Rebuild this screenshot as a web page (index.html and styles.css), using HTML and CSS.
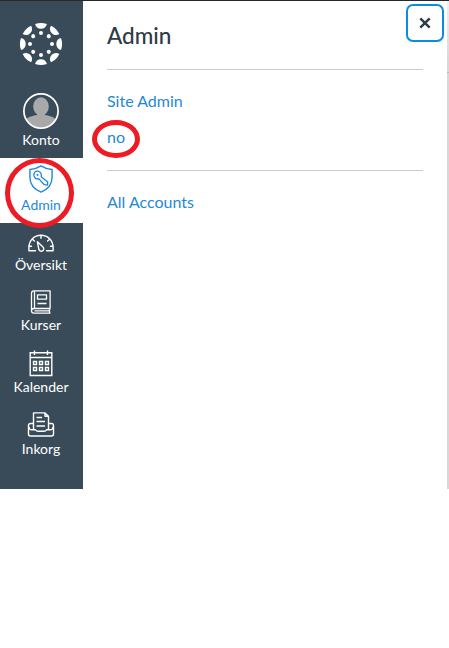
FILE: index.html
```html
<!DOCTYPE html>
<html lang="sv">
<head>
<meta charset="utf-8">
<title>Admin</title>
<link rel="stylesheet" href="styles.css">
</head>
<body>
<div class="app">
  <nav class="nav">
    <a class="logo">
      <svg width="44" height="44" viewBox="-22 -22 44 44" fill="#fff">
        <defs>
          <g id="seg"><path d="M-5.900-20Q0-22.200 5.900-20C5.300-16.900 3-15.300 0-15.300S-5.300-16.900-5.900-20Z"/><circle cy="-11" r="2"/></g>
        </defs>
        <use href="#seg"/><use href="#seg" transform="rotate(45)"/><use href="#seg" transform="rotate(90)"/><use href="#seg" transform="rotate(135)"/><use href="#seg" transform="rotate(180)"/><use href="#seg" transform="rotate(225)"/><use href="#seg" transform="rotate(270)"/><use href="#seg" transform="rotate(315)"/>
      </svg>
    </a>
    <a class="item account">
      <svg width="36" height="36" viewBox="0 0 36 36">
        <defs><clipPath id="face"><circle cx="18" cy="18" r="16.6"/></clipPath></defs>
        <g clip-path="url(#face)" fill="#a9a9a9">
          <ellipse cx="18" cy="13.5" rx="7.8" ry="9.3"/>
          <path d="M14 20h8v2c3 .8 9 1.300 12 5.500V36H2v-8.500c3-4.200 9-4.700 12-5.500Z"/>
        </g>
        <circle cx="18" cy="18" r="17.100" fill="none" stroke="#fff" stroke-width="1.700"/>
      </svg>
      <span>Konto</span>
    </a>
    <a class="item admin">
      <svg width="26" height="28" viewBox="0 0 26 28" fill="none" stroke="currentColor" stroke-width="1.400" stroke-linejoin="round">
        <path d="M13 .9C9.500 3.200 6 4.300 1.900 4.500V12C1.900 19.500 6 24.300 13 27.100 20 24.300 24.100 19.500 24.100 12V4.500C20 4.300 16.500 3.200 13 .9Z"/>
        <path d="M13.200 11.700C13.900 8.900 12.400 6.400 9.900 6.100 7.200 5.900 5.500 8.100 5.900 10.500 6.300 13.100 8.600 14.400 11 13.900L16.200 19.700 19.500 20 19.700 16.900Z" stroke-width="1.300"/>
        <path d="M8.800 9.200l1.400 1.400" stroke-width="1.600"/>
      </svg>
      <span>Admin</span>
    </a>
    <a class="item dashboard">
      <svg width="28" height="19" viewBox="0 0 28 19" fill="none" stroke="currentColor" stroke-width="1.400" stroke-linejoin="round" stroke-linecap="round">
        <path d="M8.500 16.800H1.900V13.500C1.900 6.500 7.200 1.200 14 1.200S26.100 6.500 26.100 13.500V16.800H19.500"/>
        <path d="M14 1.500V4.200M5.700 5.500l1.700 1.600M22.300 5.500l-1.700 1.600M2.300 12.300H4.500M23.500 12.300h2.200"/>
        <path d="M10.400 7.800L11.900 15.600A2.500 2.500 0 1 0 15.700 12.700Z"/>
      </svg>
      <span>Översikt</span>
    </a>
    <a class="item courses">
      <svg width="22" height="24" viewBox="0 0 22 24" fill="none" stroke="currentColor" stroke-width="1.300" stroke-linejoin="round">
        <path d="M20.100 18.500V.9H3.800C2.400.9 1.500 1.900 1.500 3.200V20.500C1.500 22 2.400 23.100 3.800 23.100H20.500M20.500 18.500H3.800C2.400 18.500 1.500 19.300 1.500 20.700M4.500 1V18.500M19.500 18.500V23M4.500 20.800H19.500"/>
        <path d="M7.500 4.800H16.500V9.200H7.500ZM7.500 13.500H16.500"/>
      </svg>
      <span>Kurser</span>
    </a>
    <a class="item calendar">
      <svg width="24" height="27" viewBox="0 0 24 27" fill="none" stroke="currentColor" stroke-width="1.400">
        <path d="M1.200 2.800H22.800V25.500H1.200ZM1.200 7.500H22.800M5.500.5V5M18.500.5V5"/>
        <path d="M4.500 11.500H7.500V14.500H4.500ZM10.500 11.500H13.500V14.500H10.500ZM16.500 11.500H19.500V14.500H16.500ZM4.500 17.500H7.500V20.500H4.500ZM10.500 17.500H13.500V20.500H10.500ZM16.500 17.500H19.500V20.500H16.500Z"/>
      </svg>
      <span>Kalender</span>
    </a>
    <a class="item inbox">
      <svg width="28" height="25" viewBox="0 0 28 25" fill="none" stroke="currentColor" stroke-width="1.400" stroke-linejoin="round">
        <path d="M6.500 17.500V.9H18L21.500 4.300V17.500M18 .9V4.300H21.500"/>
        <path d="M6 11.500H3.500C2.300 11.500 1.500 12.400 1.500 13.500V22C1.500 23.200 2.400 24 3.500 24H24.500C25.600 24 26.500 23.200 26.500 22V13.500C26.500 12.400 25.700 11.500 24.500 11.500H22M1.700 14.500C2 16.800 3 17.800 5 17.800H8.500C9.300 19 9.800 19.300 11 19.300H17C18.200 19.300 18.700 19 19.500 17.800H23C25 17.800 26 16.800 26.300 14.500"/>
        <path d="M9.500 5.500H15M9.500 9.500H18M9.500 14H18"/>
      </svg>
      <span>Inkorg</span>
    </a>
  </nav>
  <main class="panel">
    <button class="close" aria-label="Close"><svg width="12" height="12" viewBox="0 0 12 12" fill="none" stroke="#2d3b45" stroke-width="2.400"><path d="M1.300 1.300l9.400 9.400M10.700 1.300L1.300 10.700"/></svg></button>
    <h1>Admin</h1>
    <hr>
    <ul>
      <li><a>Site Admin</a></li>
      <li><a>no</a></li>
    </ul>
    <hr>
    <ul>
      <li><a>All Accounts</a></li>
    </ul>
  </main>
  <div class="page-edge"></div>
</div>
<div class="mark mark-nav"></div>
<div class="mark mark-link"></div>
</body>
</html>
```
FILE: styles.css
```css
* { box-sizing: border-box; }

body {
  margin: 0;
  background: #fff;
  color: #2d3b45;
  font-family: Lato, "Liberation Sans", sans-serif;
  font-size: 16px;
}

.app {
  display: flex;
  height: 489px;
  border-top: 1px solid #272629;
}

.nav {
  width: 83px;
  flex: none;
  background: #394b58;
  color: #fff;
}

.logo {
  display: flex;
  justify-content: center;
  height: 84px;
  padding: 21px 1px 0 0;
}

.item {
  display: flex;
  flex-direction: column;
  align-items: center;
  justify-content: space-between;
  height: 60px;
  padding: 7px 1px 9px 0;
  font-size: 14px;
  line-height: 18px;
}

.item svg, .logo svg { display: block; flex: none; }
.account { height: 73px; padding-top: 8px; }
.admin { height: 65px; background: #fff; color: #1f88d9; }
.dashboard { padding-top: 11px; }
.calendar, .inbox { height: 62px; }

.panel {
  position: relative;
  flex: 1;
  padding: 20px 24px 0;
}

h1 {
  margin: 0 0 19px;
  font-size: 22.500px;
  font-weight: 500;
  line-height: 29px;
}

hr {
  height: 1px;
  margin: 0;
  border: 0;
  background: #c7cdd1;
}

ul {
  margin: 0;
  padding: 19px 0 21px;
  list-style: none;
}

li { line-height: 24px; }
li + li { margin-top: 12px; }
li a { color: #1f88d9; }

.close {
  position: absolute;
  top: 3px;
  right: 3px;
  display: flex;
  align-items: center;
  justify-content: center;
  width: 38px;
  height: 38px;
  padding: 0;
  border: 2px solid #0c8ce0;
  border-radius: 7px;
  background: #fff;
}

.page-edge {
  width: 2px;
  background: linear-gradient(#bbb, #bbb) 0 71px / 2px 1px no-repeat, linear-gradient(#f0f0f0, #d8d8d8 60px);
}

.mark {
  position: absolute;
  border: 5px solid #ed1c24;
  border-radius: 50%;
}

.mark-nav { left: 5px; top: 158px; width: 69px; height: 70px; }
.mark-link { left: 92px; top: 120px; width: 48px; height: 38px; }
```
